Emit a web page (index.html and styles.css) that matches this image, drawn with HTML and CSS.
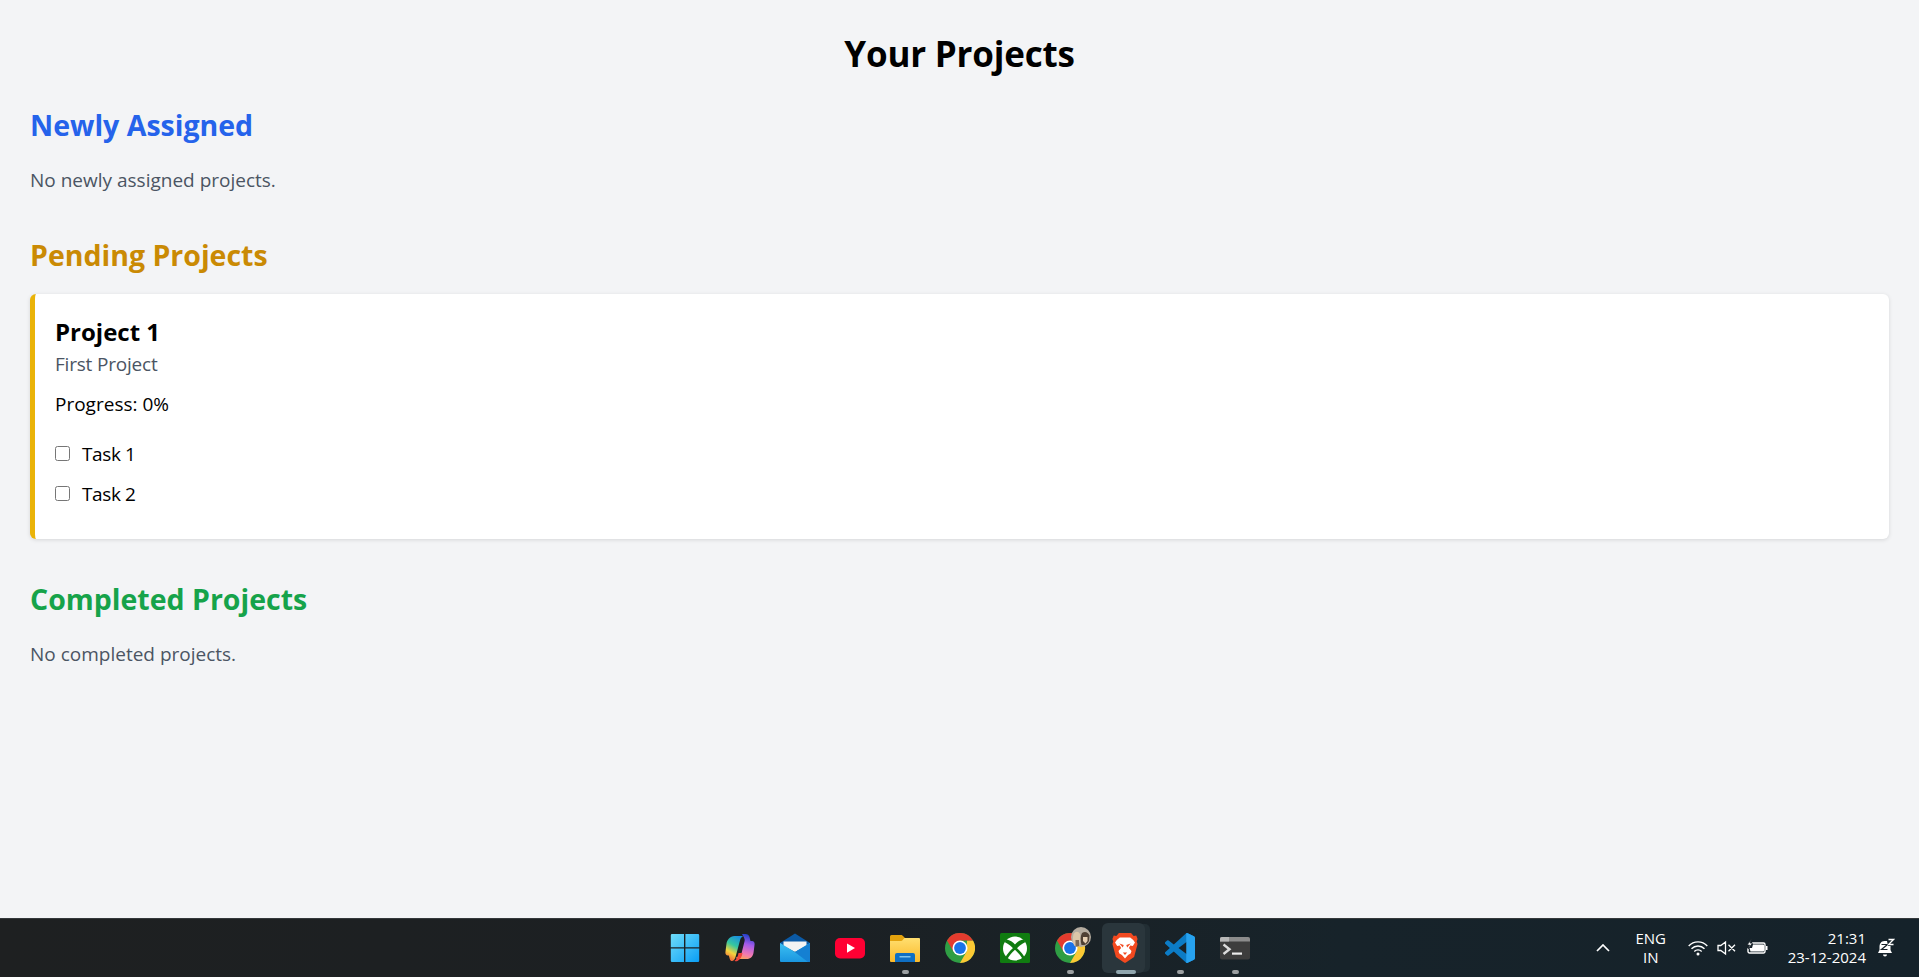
FILE: index.html
```html
<!doctype html>
<html>

<head>
	<meta charset="UTF-8">
	<title>Your Projects</title>
	<link rel="stylesheet" href="styles.css">
</head>

<body>
	<main class="page">
		<h1>Your Projects</h1>

		<section class="group">
			<h2 class="blue">Newly Assigned</h2>
			<p class="empty">No newly assigned projects.</p>
		</section>

		<section class="group">
			<h2 class="amber">Pending Projects</h2>
			<div class="card">
				<h3>Project 1</h3>
				<p class="desc">First Project</p>
				<p class="progress">Progress: 0%</p>
				<ul class="tasks">
					<li><input type="checkbox"><span>Task 1</span></li>
					<li><input type="checkbox"><span>Task 2</span></li>
				</ul>
			</div>
		</section>

		<section class="group">
			<h2 class="green">Completed Projects</h2>
			<p class="empty">No completed projects.</p>
		</section>
	</main>

	<footer class="taskbar">
		<div class="apps">
			<!-- start -->
			<div class="app">
				<svg viewBox="0 0 30 30" width="30" height="30">
					<defs>
						<linearGradient id="win" x1="0" y1="0" x2="1" y2="1">
							<stop offset="0" stop-color="#6fdcf9" />
							<stop offset="1" stop-color="#0a9ef5" />
						</linearGradient>
					</defs>
					<path fill="url(#win)" d="M2 1h12v13.200H.8V2.200A1.200 1.200 0 0 1 2 1zM15.400 1H28a1.200 1.200 0 0 1 1.200 1.200v12H15.400zM.8 15.600H14V29H2a1.200 1.200 0 0 1-1.200-1.200zM15.400 15.600h13.800v12.200A1.200 1.200 0 0 1 28 29H15.400z" />
				</svg>
			</div>
			<!-- copilot -->
			<div class="app">
				<svg viewBox="0 0 30 30" width="30" height="30">
					<defs>
						<linearGradient id="cpA" x1="0.7" y1="0" x2="0.3" y2="1">
							<stop offset="0" stop-color="#1a8fe0" />
							<stop offset="0.4" stop-color="#35c8a0" />
							<stop offset="0.7" stop-color="#f5d33c" />
							<stop offset="1" stop-color="#f0603c" />
						</linearGradient>
						<linearGradient id="cpB" x1="0.6" y1="0" x2="0.4" y2="1">
							<stop offset="0" stop-color="#1c3fc8" />
							<stop offset="0.4" stop-color="#a45bea" />
							<stop offset="0.8" stop-color="#f47ab0" />
							<stop offset="1" stop-color="#f9a060" />
						</linearGradient>
					</defs>
					<path fill="url(#cpB)" d="M17 1h3.500c2 0 3.500 1.200 4 3l1 4h1.500c1.800 0 2.800 1.400 2.600 3.200l-1 8c-.5 4-3 6.800-7 6.800h-9c-1.200 0-1.600-1-1-2 3 0 4.400-1.500 5-4l3-12c.4-1.600-.2-3-2.600-7z" />
					<path fill="url(#cpA)" d="M9.500 3h9c-1.600.6-2.800 2-3.400 4l-3.200 12-1.400 5c-.5 2-2 4-3.500 4-1 0-1.800-.6-2.200-2l-1-3.500H3C1.200 22.500.2 21 .4 19.200l1-8C2 6.800 5 3 9.500 3z" />
					<path fill="#f2453c" d="M13.500 20h4c-.5 3.500-2 6.500-5 8-2 .7-3-.2-3-.2 2-.8 3.300-3.800 4-7.800z" />
				</svg>
			</div>
			<!-- mail -->
			<div class="app">
				<svg viewBox="0 0 30 30" width="30" height="30">
					<defs>
						<linearGradient id="mailL" x1="0" y1="0" x2="0" y2="1">
							<stop offset="0" stop-color="#3cc0f2" />
							<stop offset="1" stop-color="#1a96e0" />
						</linearGradient>
					</defs>
					<path fill="#0b5aa6" d="M15 .5 30 10v2H0v-2z" />
					<path fill="#f4f4f4" d="M3.500 8.500h23V13L15 19 3.500 13z" />
					<path fill="url(#mailL)" d="M0 10 15 19l15-9v18a1 1 0 0 1-1 1H1a1 1 0 0 1-1-1z" />
					<path fill="#1580d2" d="M30 10v18a1 1 0 0 1-1 1h-1L13 17.800l2 1.200z" />
				</svg>
			</div>
			<!-- youtube -->
			<div class="app">
				<svg viewBox="0 0 30 30" width="30" height="30">
					<rect x="0" y="5" width="30" height="20.500" rx="5" fill="#ff0033" />
					<path fill="#fff" d="M12 10.500 20 15l-8 4.800z" />
				</svg>
			</div>
			<!-- files -->
			<div class="app on">
				<svg viewBox="0 0 30 30" width="30" height="30">
					<defs>
						<linearGradient id="fold" x1="0" y1="0" x2="0" y2="1">
							<stop offset="0" stop-color="#ffdf70" />
							<stop offset="1" stop-color="#fbb92a" />
						</linearGradient>
					</defs>
					<path fill="#e3a20d" d="M1.500 2h9.500c1 0 1.500.5 2.500 1.500L16 6v4H0V3.500A1.500 1.500 0 0 1 1.500 2z" />
					<path fill="url(#fold)" d="M0 8h11c1.500 0 2-1.800 3.500-3H29a1 1 0 0 1 1 1v22a1 1 0 0 1-1 1H1a1 1 0 0 1-1-1z" />
					<path fill="#0f6fc4" d="M5 29v-7a2 2 0 0 1 2-2h16a2 2 0 0 1 2 2v7z" />
					<rect x="9.500" y="23" width="11" height="1.500" fill="#7fc4ee" />
				</svg>
			</div>
			<!-- chrome -->
			<div class="app">
				<svg viewBox="0 0 30 30" width="30" height="30">
					<circle cx="15" cy="15" r="15" fill="#2f9e44" />
					<path fill="#fcc934" d="M28 7.500A15 15 0 0 1 15 30l6.500-11.250L22 7.500z" />
					<path fill="#e33b2e" d="M2 7.500A15 15 0 0 1 28 7.500H15L8.500 18.750z" />
					<circle cx="15" cy="15" r="7.500" fill="#fff" />
					<circle cx="15" cy="15" r="5.900" fill="#1a73e8" />
				</svg>
			</div>
			<!-- xbox -->
			<div class="app">
				<svg viewBox="0 0 30 30" width="30" height="30">
					<rect width="30" height="30" rx="1.500" fill="#107c10" />
					<circle cx="15" cy="15.500" r="12" fill="#fff" />
					<path fill="#107c10" d="M6.500 6.500C10 7 13 9 15 11.500 17 9 20 7 23.500 6.500L25.500 9C21 11 18 14 16.500 16L15 15l-1.500 1C12 14 9 11 4.500 9z" />
					<path fill="none" stroke="#107c10" stroke-width="2.600" d="M15 15C11 18.500 8 22 6.500 25M15 15c4 3.500 7 7 8.500 10" />
				</svg>
			</div>
			<!-- chrome, other profile -->
			<div class="app on">
				<svg viewBox="0 0 30 30" width="30" height="30" class="over">
					<circle cx="15" cy="15" r="15" fill="#2f9e44" />
					<path fill="#fcc934" d="M28 7.500A15 15 0 0 1 15 30l6.500-11.250L22 7.500z" />
					<path fill="#e33b2e" d="M2 7.500A15 15 0 0 1 28 7.500H15L8.500 18.750z" />
					<circle cx="15" cy="15" r="7.500" fill="#fff" />
					<circle cx="15" cy="15" r="5.900" fill="#1a73e8" />
					<circle cx="26" cy="4" r="10" fill="#b5aca0" />
					<path fill="#dcc6a8" d="M18.500 1c2-3 5-3 6.500 0l.5 6-2 5-4 1c-2-3-2-8-1-12z" />
					<path fill="#4f4034" d="M27 0c3-2 6-1 7.500 2.500L34 8c-2 3.500-5 4.500-7.500 4-1-4-1.500-8.500.5-12z" />
					<path fill="#e6cfb3" d="M28 4h4.500v4l-2 2.500-2.500-2.500z" />
					<path fill="#7c6a55" d="M20.500 7h3.500v6l-3.500 1z" />
				</svg>
			</div>
			<!-- brave -->
			<div class="app current">
				<svg viewBox="0 0 30 30" width="26" height="30" preserveAspectRatio="none">
					<path fill="#f2491f" d="M8 0H22L25 3 28 2.500 29.500 6 28.500 8.500 29.500 11 25.500 24 17 29 15 30 13 29 4.500 24 .5 11 1.500 8.500 .5 6 2 2.500 5 3z" />
					<path fill="#fff" d="M9 4.500H21L24.500 7 26.500 9.500 24 13 21 12.500 19.500 15 22.500 18 21.500 20.500 18.500 22 15 25.500 11.500 22 8.500 20.500 7.500 18 10.500 15 9 12.500 6 13 3.500 9.500 5.500 7z" />
					<path fill="#f2491f" d="M8.500 10.500l5 1.500-1 2.500zM21.500 10.500l-5 1.500 1 2.500zM12.500 19.500h5L15 22z" />
				</svg>
			</div>
			<!-- vs code -->
			<div class="app on">
				<svg viewBox="0 0 24 24" width="30" height="30">
					<defs>
						<clipPath id="vsRight">
							<rect x="17" y="0" width="7" height="24" />
						</clipPath>
					</defs>
					<path fill="#0c7cc6" d="M23.150 2.587L18.210.21a1.494 1.494 0 0 0-1.705.29l-9.460 8.630-4.120-3.128a.999.999 0 0 0-1.276.057L.327 7.261A1 1 0 0 0 .326 8.740L3.899 12 .326 15.260a1 1 0 0 0 .001 1.479L1.650 17.940a.999.999 0 0 0 1.276.057l4.120-3.128 9.460 8.630a1.492 1.492 0 0 0 1.704.29l4.942-2.377A1.500 1.500 0 0 0 24 20.060V3.939a1.500 1.500 0 0 0-.85-1.352zm-5.146 14.861L10.826 12l7.178-5.448v10.896z" />
					<path fill="#27a2ef" clip-path="url(#vsRight)" d="M23.150 2.587L18.210.21a1.494 1.494 0 0 0-1.705.29L16 1v22l.5.5a1.492 1.492 0 0 0 1.704.29l4.942-2.377A1.500 1.500 0 0 0 24 20.060V3.939a1.500 1.500 0 0 0-.85-1.352z" />
				</svg>
			</div>
			<!-- terminal -->
			<div class="app on">
				<svg viewBox="0 0 30 30" width="30" height="30">
					<rect x="0" y="4" width="30" height="22.500" rx="2" fill="#3d3d3d" />
					<path fill="#8c8c8c" d="M2 4h26a2 2 0 0 1 2 2v2.500H0V6a2 2 0 0 1 2-2z" />
					<path fill="#b8b8b8" d="M2 4h7v4.500H0V6a2 2 0 0 1 2-2z" />
					<path fill="none" stroke="#dcdcdc" stroke-width="2.400" d="M3.500 11.500l6 4.700-6 4.800" />
					<rect x="12" y="19.500" width="10" height="2.200" fill="#ececec" />
				</svg>
			</div>
		</div>

		<div class="tray">
			<svg class="chev" viewBox="0 0 14 8" width="14" height="8">
				<path fill="none" stroke="#fff" stroke-width="1.700" d="M1 7l6-6 6 6" />
			</svg>
			<div class="lang">ENG<br>IN</div>
			<div class="status">
				<svg viewBox="0 0 20 16" width="20" height="16">
					<path fill="none" stroke="#fff" stroke-width="1.400" d="M.7 6c5-5.500 13.600-5.500 18.600 0M3.500 8.800c3.600-3.800 9.400-3.800 13 0M6.300 11.400c2-2 5.400-2 7.400 0" />
					<circle cx="10" cy="14" r="1.500" fill="#fff" />
				</svg>
				<svg viewBox="0 0 20 16" width="20" height="16">
					<path fill="none" stroke="#fff" stroke-width="1.300" d="M1 5.500h2.800L8.500 2v12L3.800 10.500H1zM11.500 4.700l6.500 6.500M18 4.700l-6.500 6.500" />
				</svg>
				<svg viewBox="0 0 22 18" width="22" height="18">
					<path fill="none" stroke="#fff" stroke-width="1.400" d="M6 4h11.500a1.500 1.500 0 0 1 1.500 1.500v7a1.500 1.500 0 0 1-1.500 1.500H3.500A1.500 1.500 0 0 1 2 12.500V9" />
					<path fill="#fff" d="M4.500 12.500h12.800a.7.700 0 0 0 .7-.7V6.200a.7.700 0 0 0-.7-.7H7l-1 3.500H3.500z" />
					<path fill="#fff" stroke="#18222a" stroke-width=".8" d="M5.500 0 1 6h2.500L2 10l4.500-6H4z" />
					<path fill="#fff" d="M20 7h1.500v4H20z" />
				</svg>
			</div>
			<div class="clock">21:31<br>23-12-2024</div>
			<svg class="bell" viewBox="0 0 18 20" width="18" height="20">
				<path fill="#fff" d="M7.500 3C4 3 2.500 6 2.500 9v3L1 15h14l-1.500-3V8H11l-1-5z" />
				<path fill="#fff" d="M6 16.500h4A2 2 0 0 1 6 16.500z" />
				<path fill="none" stroke="#18222a" stroke-width="1.200" d="M4.500 6.500h6l-6 5h6" />
				<path fill="none" stroke="#fff" stroke-width="1.300" d="M11.500 1.500h5l-5 5h5" />
			</svg>
		</div>
	</footer>
</body>

</html>
```

FILE: styles.css
```css
* {
	box-sizing: border-box;
}

html,
body {
	height: 100%;
}

body {
	margin: 0;
	height: 100vh;
	overflow: hidden;
	display: flex;
	flex-direction: column;
	background: #f3f4f6;
	font-family: "Open Sans", "Liberation Sans", sans-serif;
	font-size: 19px;
	line-height: 30px;
	color: #000;
}

.page {
	flex: 1;
	padding: 30px;
}

h1,
h2,
h3,
p,
ul {
	margin: 0;
	padding: 0;
}

h1 {
	font-size: 35px;
	line-height: 47px;
	font-weight: 700;
	text-align: center;
	margin-bottom: 28px;
	letter-spacing: -0.2px;
}

h2 {
	font-size: 28.500px;
	line-height: 40px;
	font-weight: 700;
	margin-bottom: 19.500px;
}

.group {
	margin-bottom: 40px;
}

.blue {
	color: #2563eb;
}

.amber {
	color: #ca8a04;
}

.green {
	color: #16a34a;
}

.empty {
	color: #4b5563;
}

.card {
	background: #fff;
	border-left: 5px solid #eab308;
	border-radius: 6px;
	padding: 20px;
	height: 245px;
	box-shadow: 0 1px 4px rgba(0, 0, 0, 0.12);
}

h3 {
	font-size: 24px;
	line-height: 35px;
	font-weight: 700;
}

.desc {
	color: #4b5563;
	letter-spacing: -0.2px;
}

.progress {
	margin-top: 10px;
}

.tasks {
	list-style: none;
	margin-top: 20px;
}

.tasks li {
	display: flex;
	align-items: center;
	gap: 12px;
	margin-bottom: 10px;
	letter-spacing: -0.4px;
}

.tasks input {
	width: 15px;
	height: 15px;
	margin: 0 0 2px;
}

/* taskbar */
.taskbar {
	height: 59px;
	flex: none;
	position: relative;
	display: flex;
	justify-content: center;
	padding-left: 1px;
	background: linear-gradient(90deg, #1e2021, #1c2023 40%, #17232a 70%, #15222a);
	border-top: 1px solid #34383b;
}

.apps {
	display: flex;
}

.app {
	position: relative;
	width: 55px;
	display: flex;
	align-items: center;
	justify-content: center;
}

.app svg {
	display: block;
	margin-bottom: 1px;
}

.app svg.over {
	overflow: visible;
}

.app.on::after,
.app.current::after {
	content: "";
	position: absolute;
	left: 24px;
	top: 51px;
	width: 7px;
	height: 4px;
	border-radius: 2px;
	background: #9b9fa1;
}

.app.current::before {
	content: "";
	position: absolute;
	left: 4px;
	top: 4px;
	width: 43px;
	height: 50px;
	border-radius: 6px;
	background: #2a363c;
	box-shadow: 6px 0 0 -1px #222e34;
}

.app.current svg {
	position: relative;
}

.app.current::after {
	left: 18px;
	width: 20px;
	background: #90a6ae;
}

.tray {
	position: absolute;
	top: 0;
	right: 0;
	bottom: 0;
	display: flex;
	align-items: center;
	color: #fff;
	font-size: 15px;
	line-height: 19px;
}

.chev {
	margin-right: 23px;
}

.lang {
	width: 36px;
	text-align: center;
	margin-right: 19px;
}

.status {
	display: flex;
	align-items: center;
	gap: 9px;
	margin-right: 20px;
}

.clock {
	text-align: right;
	margin-right: 11px;
}

.bell {
	margin-right: 24px;
}
```
